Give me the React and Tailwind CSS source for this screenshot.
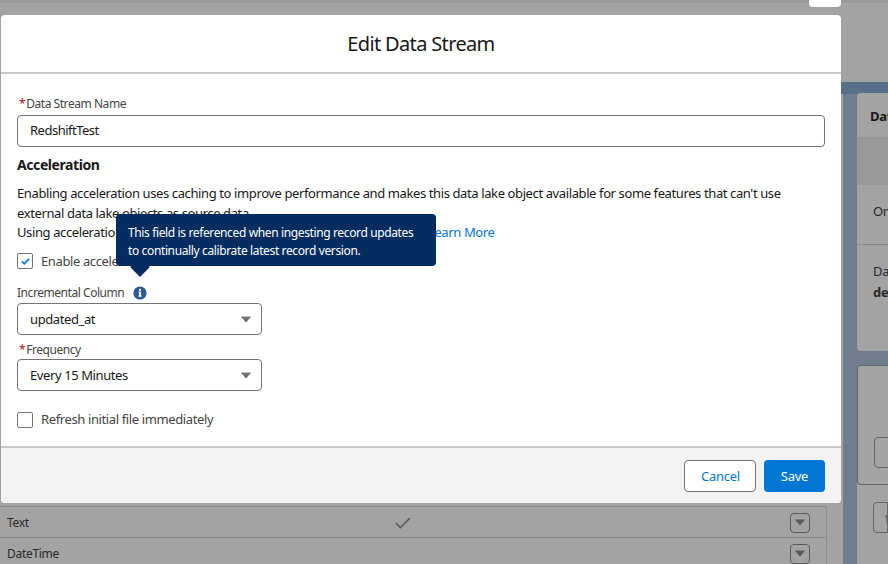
import React from 'react'

const font = { fontFamily: '"Noto Sans", sans-serif' }

const Caret = ({ className }) => (
  <svg viewBox="0 0 10 7" className={className} fill="currentColor">
    <path d="M0.3 0.5h9.4c.3 0 .4.3.2.5L5.3 6.3c-.2.2-.4.2-.6 0L.1 1c-.2-.2-.1-.5.2-.5z" />
  </svg>
)

const Select = ({ value }) => (
  <div className="flex items-center justify-between w-[245px] h-8 pl-[12px] pr-[10px] border border-[#747474] rounded bg-white text-[13px] tracking-[-0.4px] text-[#181818]">
    <span className="pt-[2px]">{value}</span>
    <Caret className="w-[10px] h-[7px] text-[#747474]" />
  </div>
)

const Label = ({ required, children }) => (
  <div className="flex items-center h-[14px] text-[12px] tracking-[-0.45px] text-[#444444]">
    {required && <span className="ml-[2px] mr-[1px] text-[#ba0517]">*</span>}
    {children}
  </div>
)

const Check = ({ checked }) => (
  <div className="flex items-center justify-center w-4 h-4 border border-[#747474] rounded-[2px] bg-white">
    {checked && (
      <svg viewBox="0 0 10 8" className="w-[9px] h-[7px]" fill="none" stroke="#0176d3" strokeWidth="2">
        <path d="M1 4l2.6 2.6L9 1" />
      </svg>
    )}
  </div>
)

const RowButton = () => (
  <button className="flex items-center justify-center ml-auto mr-[16px] w-5 h-5 border border-[#5c5c5c] rounded text-[#5c5c5c]">
    <Caret className="w-[10px] h-[7px]" />
  </button>
)

const Background = () => (
  <div className="flex h-[564px] bg-[#a3a3a3]">
    <div className="flex flex-col justify-end shrink-0 w-[841px] border-t-[3px] border-[#9b9b9b]">
      <div className="w-[827px] border-r border-[#8f8f8f] text-[12px] tracking-[-0.3px] text-[#2a2a2a]">
        <div className="flex items-center h-[31px] pl-[7px] pt-[1px] border-t border-[#8a8a8a]">
          <span className="w-[388px]">Text</span>
          <svg viewBox="0 0 16 12" className="w-4 h-3" fill="none" stroke="#5c5c5c" strokeWidth="1.6">
            <path d="M1 6l4.5 4.5L15 1" />
          </svg>
          <RowButton />
        </div>
        <div className="flex items-center h-[27px] pl-[7px] pt-[5px] border-t border-[#8a8a8a]">
          <span>DateTime</span>
          <RowButton />
        </div>
      </div>
    </div>

    <div className="flex-1 min-w-0 overflow-hidden flex flex-col">
      <div className="h-[82px] shrink-0 border-t-[3px] border-[#9b9b9b]" />
      <div className="h-[12px] shrink-0 bg-[#587089]" />
      <div className="flex-1 flex flex-col pl-[14px] border-l-2 border-[#a3a3a3] bg-[#707d8f] text-[13px] tracking-[-0.3px] text-[#2a2a2a]">
        <div className="w-full h-[258px] -mt-[1px] rounded-l bg-[#a3a3a3]">
          <div className="h-[44px] pl-[13px] pt-[14px] font-bold leading-[18px] text-[#181818]">Dat</div>
          <div className="h-[48px] bg-[#989898]" />
          <div className="h-[60px] pl-[16px] pt-[17px] leading-[18px] border-b border-[#8a8a8a]">On</div>
          <div className="pl-[16px] pt-[17px] leading-[18px]">Da</div>
          <div className="pl-[16px] pt-[3px] leading-[18px] font-bold">de</div>
        </div>
        <div className="flex-1 mt-[14px] bg-[#a3a3a3] rounded-tl">
          <div className="h-[120px] pl-[16px] pt-[71px] border-l border-t border-b border-[#666666] rounded-l">
            <div className="w-8 h-[31px] border border-[#666666] rounded-l" />
          </div>
          <div className="mt-[17px] ml-[16px] flex items-center pl-[9px] h-[31px] border border-[#666666] rounded-l text-[14px] text-[#5c5c5c]">
            ↑
          </div>
        </div>
      </div>
    </div>
  </div>
)

const Tooltip = () => (
  <div className="absolute left-[116px] top-[214px] w-[320px] h-[52px] px-3 pt-[10px] rounded bg-[#032d60] text-[12px] leading-[18px] tracking-[-0.37px] text-white">
    <div>This field is referenced when ingesting record updates</div>
    <div>to continually calibrate latest record version.</div>
    <div className="absolute left-[17px] top-[46px] w-[14px] h-[14px] rotate-45 bg-[#032d60] -z-0" />
  </div>
)

const App = () => (
  <div className="relative w-[888px] h-[564px] overflow-hidden" style={font}>
    <Background />

    <div className="absolute left-[809px] top-0 w-8 h-[7px] rounded-b bg-white" />

    <div className="absolute left-[1px] top-[15px] flex flex-col w-[840px] h-[488px] rounded bg-white">
      <div className="flex items-center justify-center h-[59px] pt-[1px] border-b-2 border-[#c9c9c9] text-[20px] tracking-[-0.65px] text-[#181818]">
        Edit Data Stream
      </div>

      <div className="flex-1 px-4 pt-[23px]">
        <Label required>Data Stream Name</Label>
        <div className="flex items-center w-[808px] h-8 mt-[4px] pl-[12px] border border-[#747474] rounded text-[13px] tracking-[-0.5px] text-[#181818]">
          RedshiftTest
        </div>

        <div className="mt-[8px] text-[14px] leading-[20px] font-bold tracking-[-0.42px] text-[#181818]">Acceleration</div>

        <div className="mt-[9px] text-[13px] leading-[19.5px] tracking-[-0.39px] text-[#181818]">
          <div>Enabling acceleration uses caching to improve performance and makes this data lake object available for some features that can't use</div>
          <div>external data lake objects as source data.</div>
          <div className="flex">
            <span className="w-[411px] whitespace-nowrap">Using acceleration can increase your usage and consumption of credits.</span>
            <a className="text-[#0176d3]">Learn More</a>
          </div>
        </div>

        <div className="flex items-center gap-2 mt-[9px] text-[13px] tracking-[-0.38px] text-[#444444]">
          <Check checked />
          <span>Enable acceleration</span>
        </div>

        <div className="flex items-center mt-[15px] h-[14px]">
          <Label>Incremental Column</Label>
          <svg viewBox="0 0 14 14" className="ml-[9px] w-[14px] h-[14px]">
            <circle cx="7" cy="7" r="6.6" fill="#2e5a9a" />
            <rect x="6" y="5.8" width="2" height="4.8" fill="#fff" />
            <rect x="5.4" y="9.6" width="3.2" height="1" fill="#fff" />
            <rect x="5.4" y="5.8" width="2" height="1" fill="#fff" />
            <circle cx="7" cy="3.9" r="1.1" fill="#fff" />
          </svg>
        </div>
        <div className="mt-[3px]">
          <Select value="updated_at" />
        </div>

        <div className="mt-[8px]">
          <Label required>Frequency</Label>
        </div>
        <div className="mt-[2px]">
          <Select value="Every 15 Minutes" />
        </div>

        <div className="flex items-center gap-2 mt-[19px] text-[13px] tracking-[-0.38px] text-[#444444]">
          <Check />
          <span>Refresh initial file immediately</span>
        </div>
      </div>

      <div className="flex items-center justify-end gap-2 h-[57px] px-4 border-t-2 border-[#c9c9c9] rounded-b bg-[#f3f3f3] text-[13px] tracking-[-0.25px]">
        <button className="w-[72px] h-8 pt-[2px] pl-[1px] border border-[#747474] rounded bg-white text-[#0176d3]">Cancel</button>
        <button className="w-[61px] h-8 pt-[2px] rounded bg-[#0176d3] text-white">Save</button>
      </div>
    </div>

    <Tooltip />
  </div>
)

export default App
